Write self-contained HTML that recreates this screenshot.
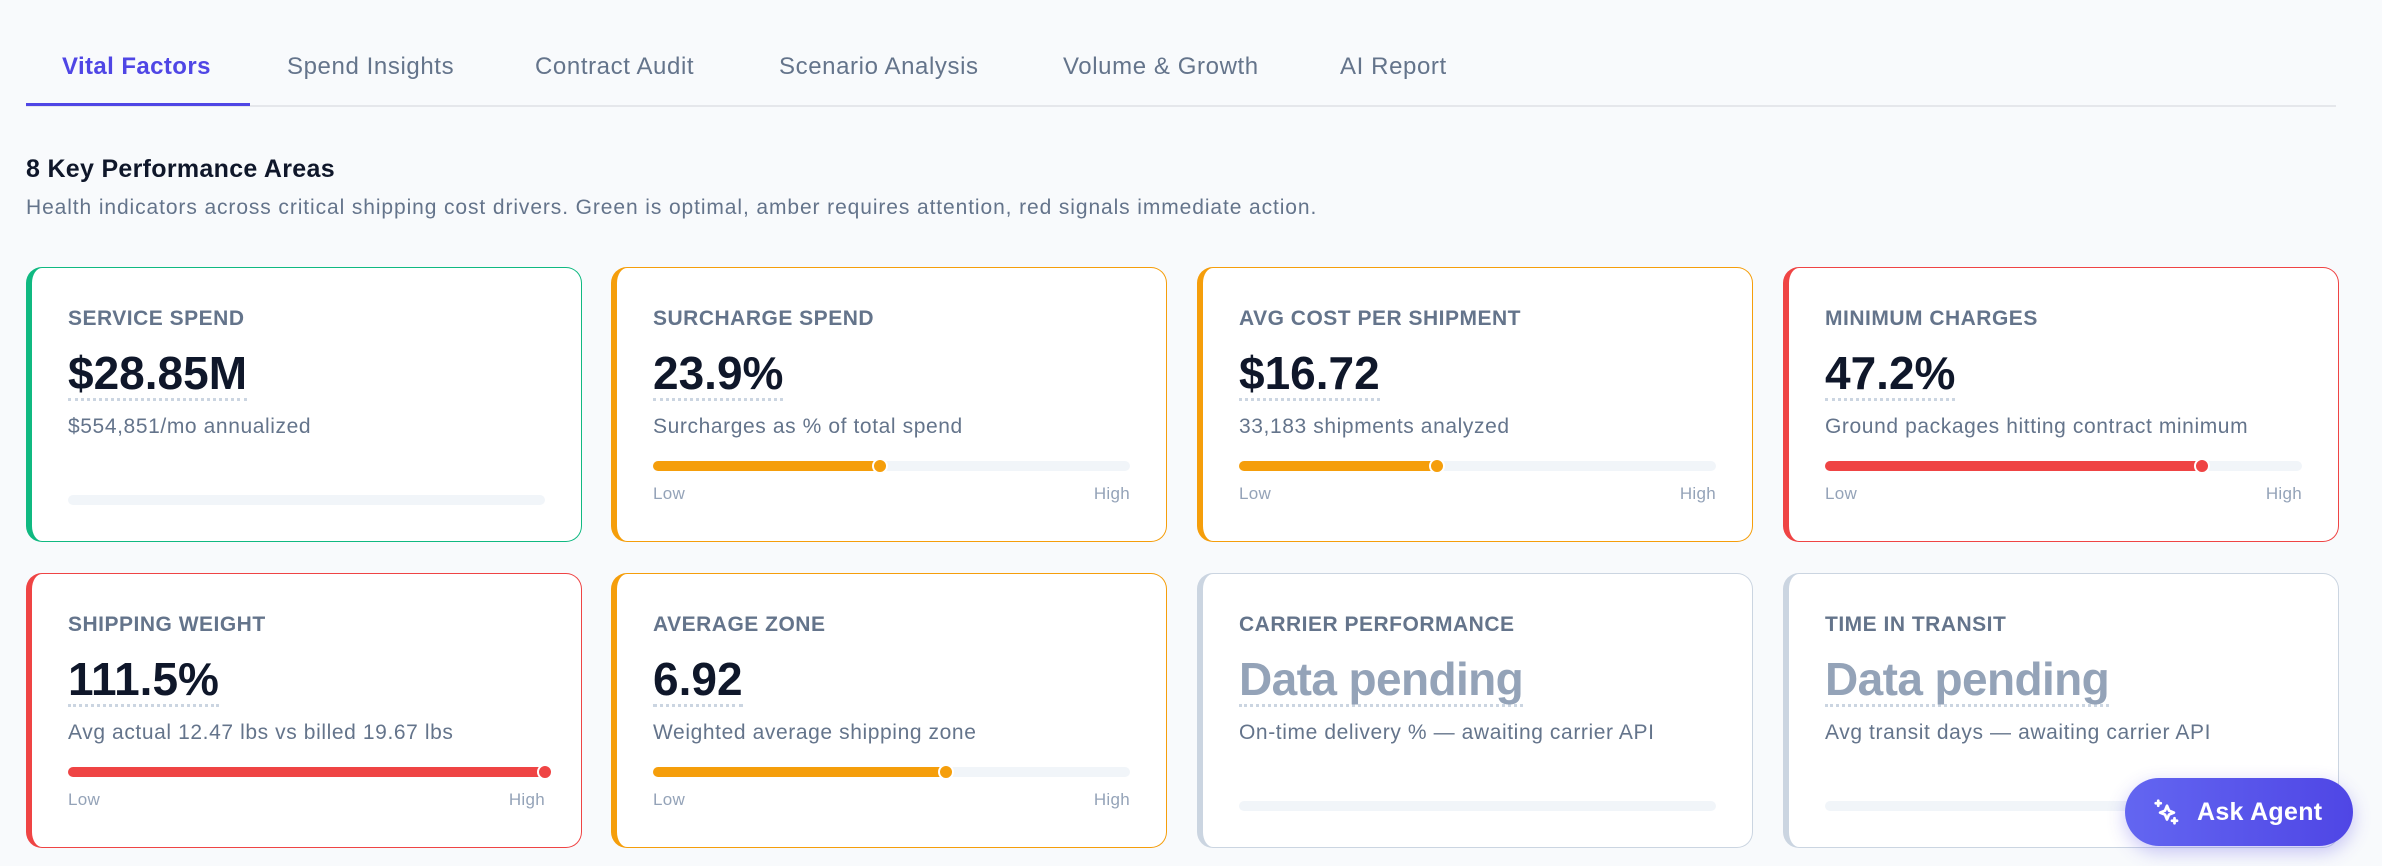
<!DOCTYPE html>
<html><head><meta charset="utf-8"><style>
*{box-sizing:border-box;margin:0;padding:0}
body{width:2382px;height:866px;background:#f8fafc;font-family:"Liberation Sans",sans-serif;position:relative;overflow:hidden}
.tabs{position:absolute;left:26px;top:0;width:2310px;height:107px;border-bottom:2px solid #e5e7eb}
.tab{position:absolute;top:53px;font-size:24px;color:#64748b;letter-spacing:.6px}
.tab.a{color:#4f46e5;font-weight:600;letter-spacing:.4px}
.ul{position:absolute;left:0;top:103px;width:224px;height:3px;background:#4f46e5}
h2{position:absolute;left:26px;top:155px;font-size:25px;font-weight:700;color:#0f172a;letter-spacing:.3px}
.sub{position:absolute;left:26px;top:196px;font-size:21px;color:#64748b;letter-spacing:.9px}
.card{position:absolute;width:556px;height:275px;background:#fff;border:1.5px solid;border-left-width:6px;border-radius:16px}
.g{border-color:#10b981}.o{border-color:#f59e0b}.r{border-color:#ef4444}.n{border-color:#cbd5e1}
.lbl{position:absolute;left:36px;top:39px;font-size:21px;font-weight:600;color:#64748b;letter-spacing:.5px}
.val{position:absolute;left:36px;top:80px;font-size:46px;font-weight:700;color:#0f172a;border-bottom:3px dotted #cbd5e1;line-height:50px}
.val.p{color:#94a3b8;letter-spacing:-.6px}
.d{position:absolute;left:36px;top:147px;font-size:21px;color:#64748b;letter-spacing:.6px}
.bar{position:absolute;left:36px;right:36px;top:193px;height:10px;border-radius:5px;background:#f1f5f9}
.bar.e{top:227px}
.f{position:absolute;left:0;top:0;height:10px;border-radius:5px}
.dot{position:absolute;top:-3px;width:16px;height:16px;border-radius:50%;border:2px solid #fff;margin-left:-8px}
.lo,.hi{position:absolute;top:216px;font-size:17px;color:#94a3b8;letter-spacing:.3px}
.lo{left:36px}.hi{right:36px}
.btn{position:absolute;left:2125px;top:778px;width:228px;height:68px;border-radius:34px;background:linear-gradient(90deg,#6366f1,#4f46e5);color:#fff;font-size:25px;font-weight:600;box-shadow:0 6px 18px rgba(79,70,229,.3)}
.btn span{position:absolute;left:72px;top:20px;letter-spacing:.3px}
</style></head><body>
<div class="tabs">
<div class="tab a" style="left:36px">Vital Factors</div>
<div class="tab" style="left:261px">Spend Insights</div>
<div class="tab" style="left:509px">Contract Audit</div>
<div class="tab" style="left:753px">Scenario Analysis</div>
<div class="tab" style="left:1037px">Volume &amp; Growth</div>
<div class="tab" style="left:1314px">AI Report</div>
<div class="ul"></div>
</div>
<h2>8 Key Performance Areas</h2>
<div class="sub">Health indicators across critical shipping cost drivers. Green is optimal, amber requires attention, red signals immediate action.</div>

<div class="card g" style="left:26px;top:267px"><div class="lbl">SERVICE SPEND</div><div class="val">$28.85M</div><div class="d">$554,851/mo annualized</div><div class="bar e"></div></div>
<div class="card o" style="left:611px;top:267px"><div class="lbl">SURCHARGE SPEND</div><div class="val">23.9%</div><div class="d">Surcharges as % of total spend</div><div class="bar"><div class="f" style="width:47.6%;background:#f59e0b"></div><div class="dot" style="left:47.6%;background:#f59e0b"></div></div><div class="lo">Low</div><div class="hi">High</div></div>
<div class="card o" style="left:1197px;top:267px"><div class="lbl">AVG COST PER SHIPMENT</div><div class="val">$16.72</div><div class="d">33,183 shipments analyzed</div><div class="bar"><div class="f" style="width:41.5%;background:#f59e0b"></div><div class="dot" style="left:41.5%;background:#f59e0b"></div></div><div class="lo">Low</div><div class="hi">High</div></div>
<div class="card r" style="left:1783px;top:267px"><div class="lbl">MINIMUM CHARGES</div><div class="val">47.2%</div><div class="d">Ground packages hitting contract minimum</div><div class="bar"><div class="f" style="width:79%;background:#ef4444"></div><div class="dot" style="left:79%;background:#ef4444"></div></div><div class="lo">Low</div><div class="hi">High</div></div>

<div class="card r" style="left:26px;top:573px"><div class="lbl">SHIPPING WEIGHT</div><div class="val">111.5%</div><div class="d">Avg actual 12.47 lbs vs billed 19.67 lbs</div><div class="bar"><div class="f" style="width:100%;background:#ef4444"></div><div class="dot" style="left:100%;background:#ef4444"></div></div><div class="lo">Low</div><div class="hi">High</div></div>
<div class="card o" style="left:611px;top:573px"><div class="lbl">AVERAGE ZONE</div><div class="val">6.92</div><div class="d">Weighted average shipping zone</div><div class="bar"><div class="f" style="width:61.5%;background:#f59e0b"></div><div class="dot" style="left:61.5%;background:#f59e0b"></div></div><div class="lo">Low</div><div class="hi">High</div></div>
<div class="card n" style="left:1197px;top:573px"><div class="lbl">CARRIER PERFORMANCE</div><div class="val p">Data pending</div><div class="d">On-time delivery % — awaiting carrier API</div><div class="bar e"></div></div>
<div class="card n" style="left:1783px;top:573px"><div class="lbl">TIME IN TRANSIT</div><div class="val p">Data pending</div><div class="d">Avg transit days — awaiting carrier API</div><div class="bar e"></div></div>

<div class="btn"><svg style="position:absolute;left:27px;top:19px" width="30" height="30" viewBox="0 0 24 24" fill="none" stroke="#fff" stroke-width="2.2" stroke-linejoin="round" stroke-linecap="round"><path d="M12 7l1.6 3.9L17.5 12.5l-3.9 1.6L12 18l-1.6-3.9L6.5 12.5l3.9-1.6z"/><path d="M5 3v4M3 5h4M18 17v4M16 19h4"/></svg><span>Ask Agent</span></div>
</body></html>
